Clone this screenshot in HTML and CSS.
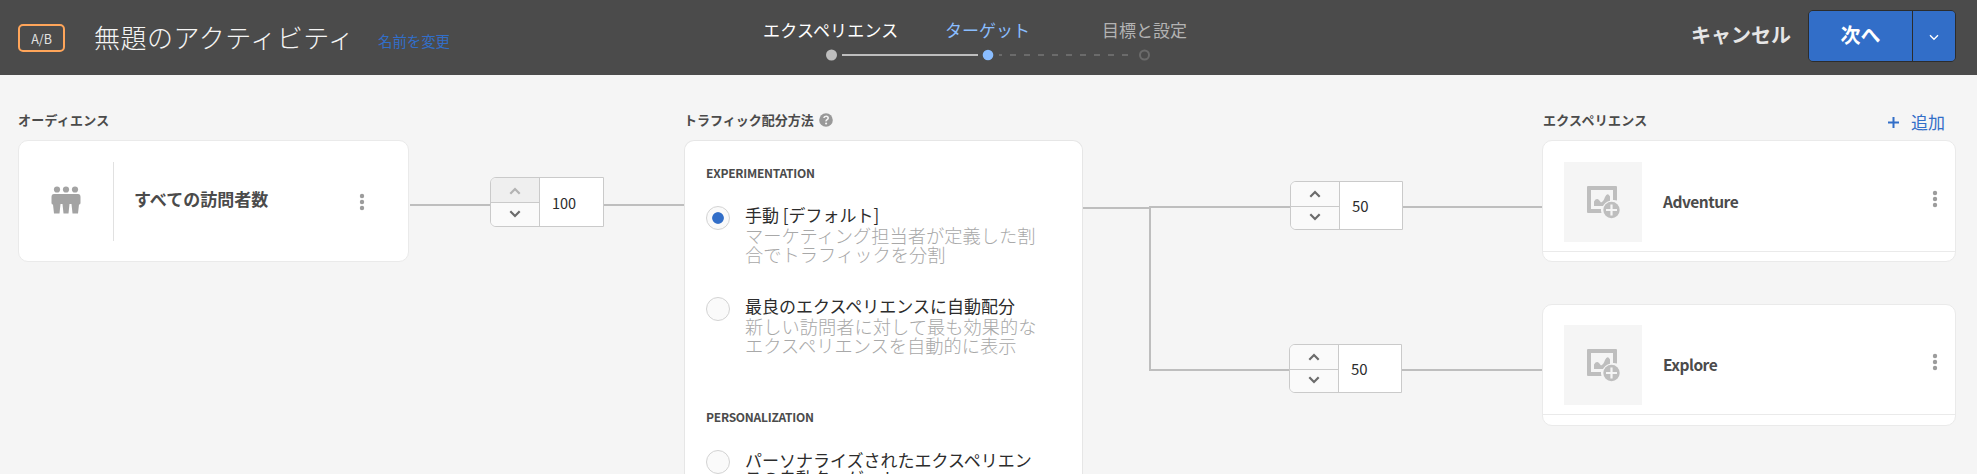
FILE: index.html
```html
<!DOCTYPE html>
<html lang="ja">
<head>
<meta charset="utf-8">
<title>無題のアクティビティ</title>
<link rel="stylesheet" href="styles.css">
</head>
<body>
<svg class="sprite" aria-hidden="true">
  <symbol id="up" viewBox="0 0 12 8"><path d="M1.300 6.700 6 2l4.700 4.700" fill="none" stroke="currentColor" stroke-width="2.200"/></symbol>
  <symbol id="down" viewBox="0 0 12 8"><path d="M1.300 1.300 6 6l4.700-4.700" fill="none" stroke="currentColor" stroke-width="2.200"/></symbol>
  <symbol id="dots" viewBox="0 0 6 18"><g fill="#9c9c9c"><circle cx="3" cy="3" r="2.200"/><circle cx="3" cy="9" r="2.200"/><circle cx="3" cy="15" r="2.200"/></g></symbol>
  <symbol id="image-add" viewBox="0 0 33 33">
    <path fill="#bebebe" d="M1 0h28a1 1 0 0 1 1 1v13.500a10 10 0 0 0-4-.5V4H4v19h10a10 10 0 0 0 .5 4H1a1 1 0 0 1-1-1V1a1 1 0 0 1 1-1z"/>
    <path fill="#bebebe" d="M7 20v-4.500q2.500-4 5-1.500l2 2.500q2.500-1 4-5.500 2.500-5 5-.5v4.200Q18 16 16 20z"/>
    <circle cx="24.500" cy="24" r="8.200" fill="#bebebe"/>
    <path stroke="#f5f5f5" stroke-width="2.200" d="M24.500 18.500v11M19 24h11"/>
  </symbol>
</svg>

<header class="topbar">
  <span class="badge">A/B</span>
  <h1 class="title">無題のアクティビティ</h1>
  <a class="rename">名前を変更</a>
  <nav class="steps">
    <div class="step step-done">エクスペリエンス</div>
    <div class="step step-current">ターゲット</div>
    <div class="step step-next">目標と設定</div>
    <svg class="track" width="326" height="12" viewBox="0 0 326 12">
      <circle cx="6.500" cy="6" r="5.500" fill="#bebebe"/>
      <path d="M17 6h136" stroke="#bebebe" stroke-width="2"/>
      <circle cx="163" cy="6" r="5.300" fill="#8abdff"/>
      <path d="M174 6h135" stroke="#6b6b6b" stroke-width="2" stroke-dasharray="6 8" stroke-dashoffset="3"/>
      <circle cx="319.500" cy="6" r="4.500" fill="none" stroke="#6b6b6b" stroke-width="2"/>
    </svg>
  </nav>
  <div class="actions">
    <a class="cancel">キャンセル</a>
    <div class="split">
      <button class="next">次へ</button>
      <button class="more"><svg width="10" height="7" viewBox="0 0 10 7"><path d="M1 1.200l4 4 4-4" fill="none" stroke="#fff" stroke-width="1.400"/></svg></button>
    </div>
  </div>
</header>

<main class="flow">
  <section class="col-audience">
    <h2 class="label wide">オーディエンス</h2>
    <div class="card audience">
      <div class="people">
        <svg width="30" height="28" viewBox="0 0 30 28" fill="#a3a3a3"><circle cx="6" cy="3.500" r="3.100"/><circle cx="15" cy="3.500" r="3.100"/><circle cx="24" cy="3.500" r="3.100"/><path d="M3 8h24q2.500 0 2.500 3v6q0 1.500-1.500 1.500L27 27.500h-5.500L20.500 18h-2l-1 9.500h-5l-1-9.500h-2l-1 9.500H3L2 18.500Q.5 18.500.5 17v-6Q.5 8 3 8z"/></svg>
      </div>
      <span class="audience-name">すべての訪問者数</span>
      <svg class="kebab" width="6" height="18"><use href="#dots"/></svg>
    </div>
  </section>

  <div class="link-in">
    <i class="wire"></i>
    <div class="stepper">
      <div class="spin"><span class="off"><svg width="12" height="8"><use href="#up"/></svg></span><span><svg width="12" height="8"><use href="#down"/></svg></span></div>
      <span class="value">100</span>
    </div>
    <i class="wire"></i>
  </div>

  <section class="col-method">
    <h2 class="label method-label">トラフィック配分方法
      <svg width="14" height="14" viewBox="0 0 14 14"><circle cx="7" cy="7" r="6.800" fill="#999"/><path d="M4.900 5q.2-1.800 2.200-1.800T9.200 5q0 .9-1.100 1.600T7.100 8.300" fill="none" stroke="#f5f5f5" stroke-width="1.600"/><circle cx="7.100" cy="10.500" r="1.100" fill="#f5f5f5"/></svg>
    </h2>
    <div class="card methods">
      <h3 class="group">EXPERIMENTATION</h3>
      <div class="option">
        <i class="radio checked"></i>
        <div><div class="name">手動 [デフォルト]</div><p class="desc">マーケティング担当者が定義した割<br>合でトラフィックを分割</p></div>
      </div>
      <div class="option second">
        <i class="radio"></i>
        <div><div class="name">最良のエクスペリエンスに自動配分</div><p class="desc">新しい訪問者に対して最も効果的な<br>エクスペリエンスを自動的に表示</p></div>
      </div>
      <h3 class="group">PERSONALIZATION</h3>
      <div class="option">
        <i class="radio"></i>
        <div class="name tight">パーソナライズされたエクスペリエン<br>スの自動ターゲット</div>
      </div>
    </div>
  </section>

  <div class="link-out">
    <i class="trunk"></i>
    <div class="branches">
      <div class="branch">
        <i class="wire"></i>
        <div class="stepper small">
          <div class="spin"><span><svg width="12" height="8"><use href="#up"/></svg></span><span><svg width="12" height="8"><use href="#down"/></svg></span></div>
          <span class="value">50</span>
        </div>
        <i class="wire tail"></i>
      </div>
      <i class="riser"></i>
      <div class="branch lower">
        <i class="wire"></i>
        <div class="stepper small">
          <div class="spin"><span><svg width="12" height="8"><use href="#up"/></svg></span><span><svg width="12" height="8"><use href="#down"/></svg></span></div>
          <span class="value">50</span>
        </div>
        <i class="wire tail"></i>
      </div>
    </div>
  </div>

  <section class="col-experience">
    <div class="exp-head"><h2 class="label wide">エクスペリエンス</h2>
      <a class="add"><svg width="11" height="11" viewBox="0 0 11 11"><path d="M5.500 0v11M0 5.500h11" stroke="#326ec8" stroke-width="2"/></svg>追加</a></div>
    <article class="card experience">
      <div class="exp-body"><div class="thumb"><svg width="33" height="33"><use href="#image-add"/></svg></div>
      <span class="exp-name">Adventure</span><svg class="kebab" width="6" height="18"><use href="#dots"/></svg></div>
    </article>
    <article class="card experience">
      <div class="exp-body"><div class="thumb"><svg width="33" height="33"><use href="#image-add"/></svg></div>
      <span class="exp-name">Explore</span><svg class="kebab" width="6" height="18"><use href="#dots"/></svg></div>
    </article>
  </section>
</main>
</body>
</html>
```

FILE: styles.css
```css
* { box-sizing: border-box; }
body {
  margin: 0;
  height: 474px;
  overflow: hidden;
  background: #f5f5f5;
  color: #4b4b4b;
  font-family: "Noto Sans CJK JP", sans-serif;
}
h1, h2, h3, p { margin: 0; }
svg { display: block; flex: none; }
.sprite { position: absolute; width: 0; height: 0; }

.topbar {
  display: grid;
  grid-template-columns: 47px 283px 386px 424px 1fr;
  padding: 0 21px 0 18px;
  height: 75px;
  background: #4b4b4b;
}
.badge {
  display: flex;
  align-items: center;
  justify-content: center;
  height: 28px;
  margin-top: 24px;
  border: 2px solid #ffa55a;
  border-radius: 5px;
  color: #e1e1e1;
  font-size: 12.5px;
}
.title {
  padding-left: 29px;
  font-size: 26px;
  font-weight: 300;
  line-height: 74px;
  letter-spacing: 0.5px;
  color: #f5f5f5;
  white-space: nowrap;
}
.rename { padding-left: 30px; font-size: 14.400px; line-height: 82px; color: #326ec8; }
.steps {
  display: grid;
  grid-template-columns: 196px 156px 156px;
  grid-template-rows: 24px 12px;
  row-gap: 6px;
  padding-top: 18px;
  font-size: 17px;
  line-height: 24px;
}
.step { white-space: nowrap; }
.step-done { color: #fff; padding-left: 29px; letter-spacing: 0.2px; }
.step-current { color: #8abdff; padding-left: 15px; }
.step-next { color: #b3b3b3; padding-left: 16px; }
.track { grid-column: 1 / -1; margin: 1px 0 0 91px; }
.actions { display: flex; justify-content: flex-end; gap: 17px; padding-top: 10px; }
.cancel { font-size: 20px; font-weight: 700; line-height: 50px; color: #e6e6e6; }
.split { display: flex; width: 148px; height: 52px; border: 1px solid #2c2c2c; border-radius: 5px; overflow: hidden; }
.split button {
  display: flex;
  align-items: center;
  justify-content: center;
  padding: 0;
  border: 0;
  background: #326ec8;
  color: #fff;
  font: 700 20px/48px "Noto Sans CJK JP", sans-serif;
}
.split .next { width: 103px; padding-bottom: 2px; }
.split .more { flex: 1; border-left: 1px solid #2c2c2c; padding-top: 2px; }

.flow { display: grid; grid-template-columns: 391px 275px 399px 459px 414px; height: 399px; overflow: hidden; padding-left: 18px; }
.label { height: 65px; padding-top: 35px; font-size: 13px; line-height: 20px; font-weight: 700; }
.wide { letter-spacing: 0.25px; }
.card { background: #fff; border: 1px solid #eaeaea; border-radius: 10px; }

.audience { display: flex; align-items: flex-start; height: 122px; padding-top: 21px; }
.people { width: 95px; height: 79px; padding: 24px 0 0 32px; border-right: 1px solid #e1e1e1; }
.audience-name { width: 226px; padding-left: 20px; font-size: 17px; line-height: 24px; font-weight: 700; margin-top: 25px; }
.audience .kebab { margin: 31px 0 0 19px; }

.wire { height: 2px; background: #bebebe; flex: 1; }
.link-in { display: flex; align-items: flex-start; padding: 102px 0 0 1px; }
.link-in .wire { margin-top: 27px; }
.stepper { display: flex; width: 114px; height: 50px; border: 1px solid #cacaca; border-radius: 6px 0 0 6px; background: #fff; overflow: hidden; }
.spin { display: grid; grid-template-rows: 1fr 1fr; width: 49px; border-right: 1px solid #cacaca; color: #6b6b6b; }
.spin span { display: flex; align-items: center; justify-content: center; background: #fafafa; }
.spin span + span { border-top: 1px solid #cacaca; padding-bottom: 2px; }
.spin .off { background: #efefef; color: #b3b3b3; padding-top: 2px; }
.value { padding-left: 12px; font-size: 14.500px; line-height: 49px; color: #2c2c2c; }
.small { width: 113px; height: 49px; }
.small .value { padding-left: 12px; font-size: 15px; line-height: 47px; }
.small .spin span + span { padding-bottom: 1px; }

.method-label { display: flex; gap: 5px; }
.method-label svg { margin-top: 3px; }
.methods { height: 334px; padding: 23px 21px 0; border-color: #e6e6e6; border-bottom: 0; border-radius: 10px 10px 0 0; }
.group { font-size: 12px; line-height: 18px; font-weight: 700; letter-spacing: -0.25px; }
.option { display: flex; gap: 15px; padding-top: 21px; white-space: nowrap; }
.radio { flex: none; width: 24px; height: 24px; margin-top: 3px; border: 1px solid #d3d3d3; border-radius: 50%; background: #fafafa; }
.checked { background: radial-gradient(circle, #326ec8 5.400px, #fafafa 6.200px); }
.name { font-size: 17px; line-height: 20px; padding-top: 2px; color: #2c2c2c; }
.name.tight { line-height: 18px; padding-top: 4px; }
.desc { font-size: 18.250px; line-height: 18.500px; color: #a8a8a8; font-weight: 300; margin-top: 1px; }
.second { padding: 31px 0 54px; }

.link-out { display: flex; align-items: flex-start; padding-top: 106px; }
.trunk { width: 66px; height: 2px; margin-top: 26px; background: #bebebe; }
.branches { flex: 1; }
.branch { display: flex; align-items: flex-start; height: 49px; }
.branch .wire { margin-top: 25px; }
.branch .tail { flex: none; width: 139px; }
.branch.lower .tail { width: 140px; }
.riser { display: block; width: 2px; height: 163px; margin: -24px 0 -25px; background: #bebebe; }

.exp-head { display: flex; justify-content: space-between; padding: 0 11px 0 1px; }
.add { display: flex; gap: 12px; padding-top: 34px; font-size: 17px; line-height: 25px; color: #326ec8; }
.add svg { margin-top: 8px; }
.experience { height: 122px; margin-bottom: 42px; padding-top: 21px; }
.experience + .experience { padding-top: 20px; }
.exp-body { display: flex; height: 90px; padding-left: 21px; border-bottom: 1px solid #eaeaea; }
.thumb { width: 78px; height: 80px; padding: 24px 0 0 23px; background: #f5f5f5; }
.exp-name { width: 268px; padding-left: 21px; font-size: 15.500px; line-height: 78px; font-weight: 700; letter-spacing: -0.5px; }
.exp-body .kebab { margin: 28px 0 0 22px; }
```
